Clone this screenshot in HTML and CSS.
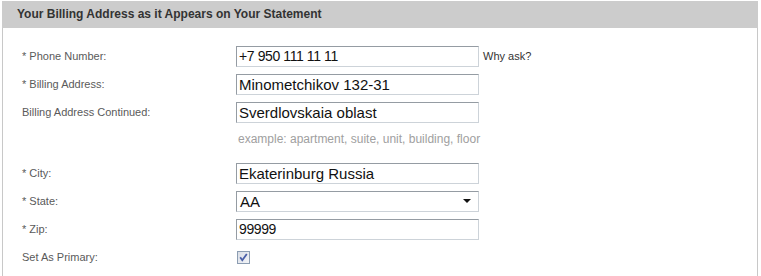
FILE: index.html
```html
<!DOCTYPE html>
<html>
<head>
<meta charset="utf-8">
<link rel="stylesheet" href="styles.css">
</head>
<body>
<div class="panel">
  <div class="panel-head">Your Billing Address as it Appears on Your Statement</div>
  <div class="panel-body">
    <div class="row">
      <div class="label">* Phone Number:</div>
      <div class="field"><div class="input digits">+7 950 111 11 11</div><span class="hint">Why ask?</span></div>
    </div>
    <div class="row">
      <div class="label">* Billing Address:</div>
      <div class="field"><div class="input">Minometchikov 132-31</div></div>
    </div>
    <div class="row">
      <div class="label">Billing Address Continued:</div>
      <div class="field"><div class="input">Sverdlovskaia oblast</div></div>
    </div>
    <div class="row example-row">
      <div class="label"></div>
      <div class="example">example: apartment, suite, unit, building, floor</div>
    </div>
    <div class="row">
      <div class="label">* City:</div>
      <div class="field"><div class="input">Ekaterinburg Russia</div></div>
    </div>
    <div class="row">
      <div class="label">* State:</div>
      <div class="field"><div class="input select"><span>AA</span><svg class="arrow" width="8" height="4" viewBox="0 0 8 4"><path d="M0 0H8L4 4Z" fill="#111"/></svg></div></div>
    </div>
    <div class="row">
      <div class="label">* Zip:</div>
      <div class="field"><div class="input digits">99999</div></div>
    </div>
    <div class="row">
      <div class="label">Set As Primary:</div>
      <div class="field">
        <svg class="checkbox" width="13" height="13" viewBox="0 0 13 13">
          <defs><linearGradient id="g" x1="0" y1="0" x2="1" y2="1"><stop offset="0" stop-color="#d8dde6"/><stop offset="1" stop-color="#f4f5f8"/></linearGradient></defs>
          <rect x="0.5" y="0.5" width="12" height="12" fill="url(#g)" stroke="#8c9db2"/>
          <path d="M3.2 6.2L5.3 9.2L9.8 3" fill="none" stroke="#4a5fa8" stroke-width="1.8"/>
        </svg>
      </div>
    </div>
  </div>
</div>
</body>
</html>
```
FILE: styles.css
```css
html, body {
  margin: 0;
  padding: 0;
  background: #fff;
}
body {
  font-family: "Liberation Sans", Arial, sans-serif;
  padding: 1px 0 0 2px;
}
.panel {
  width: 756px;
  border-left: 1px solid #c8c8c8;
  border-right: 1px solid #c8c8c8;
  height: 275px;
  box-sizing: border-box;
}
.panel-head {
  height: 27px;
  background: #cccccc;
  color: #333;
  font-weight: bold;
  font-size: 12px;
  line-height: 27px;
  padding-left: 15px;
  margin-left: -1px;
  margin-right: -1px;
}
.panel-body {
  padding: 14px 0 0 19px;
}
.row {
  display: grid;
  grid-template-columns: 214px 1fr;
  align-items: center;
  height: 28px;
}
.label {
  font-size: 11px;
  color: #5a5a5a;
}
.field {
  display: flex;
  align-items: center;
}
.input {
  width: 243px;
  height: 21px;
  box-sizing: border-box;
  border: 1px solid;
  border-color: #959ca3 #cdd3d9 #cdd3d9 #959ca3;
  font-size: 15px;
  line-height: 19px;
  padding-left: 2px;
  color: #111;
  background: #fff;
}
.digits {
  font-size: 14px;
  letter-spacing: -0.4px;
}
.select {
  display: flex;
  justify-content: space-between;
  align-items: center;
  padding: 0 7px 0 3px;
}
.arrow {
  display: block;
}
.hint {
  font-size: 11px;
  color: #333;
  margin-left: 4px;
}
.example-row {
  height: 33px;
  align-items: start;
}
.example {
  font-size: 12px;
  color: #a0a0a0;
  padding: 6px 0 0 2px;
  line-height: 14px;
}
.checkbox {
  display: block;
  margin-left: 1px;
}
```
